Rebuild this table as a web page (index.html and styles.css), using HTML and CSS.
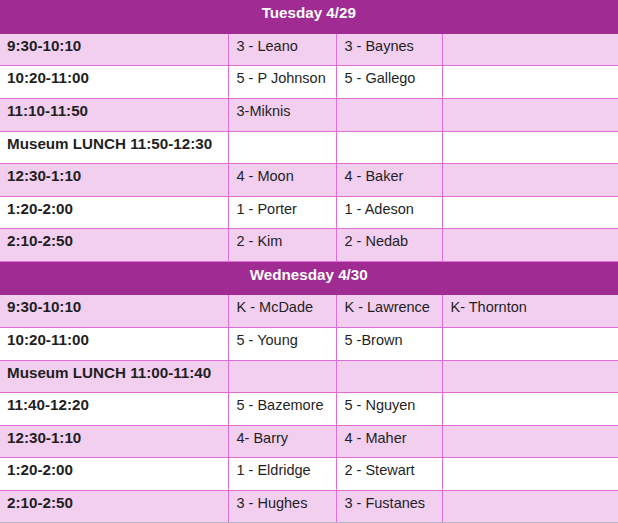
FILE: index.html
```html
<!DOCTYPE html>
<html>
<head>
<meta charset="utf-8">
<link rel="stylesheet" href="styles.css">
</head>
<body>
<table class="sched">
<colgroup><col class="c1"><col class="c2"><col class="c3"><col class="c4"></colgroup>
<tbody>
<tr class="day"><td colspan="4">Tuesday 4/29</td></tr>
<tr class="alt"><td class="time">9:30-10:10</td><td>3 - Leano</td><td>3 - Baynes</td><td></td></tr>
<tr><td class="time">10:20-11:00</td><td>5 - P Johnson</td><td>5 - Gallego</td><td></td></tr>
<tr class="alt"><td class="time">11:10-11:50</td><td>3-Miknis</td><td></td><td></td></tr>
<tr><td class="time">Museum LUNCH 11:50-12:30</td><td></td><td></td><td></td></tr>
<tr class="alt"><td class="time">12:30-1:10</td><td>4 - Moon</td><td>4 - Baker</td><td></td></tr>
<tr><td class="time">1:20-2:00</td><td>1 - Porter</td><td>1 - Adeson</td><td></td></tr>
<tr class="alt"><td class="time">2:10-2:50</td><td>2 - Kim</td><td>2 - Nedab</td><td></td></tr>
<tr class="day"><td colspan="4">Wednesday 4/30</td></tr>
<tr class="alt"><td class="time">9:30-10:10</td><td>K - McDade</td><td>K - Lawrence</td><td>K- Thornton</td></tr>
<tr><td class="time">10:20-11:00</td><td>5 - Young</td><td>5 -Brown</td><td></td></tr>
<tr class="alt"><td class="time">Museum LUNCH 11:00-11:40</td><td></td><td></td><td></td></tr>
<tr><td class="time">11:40-12:20</td><td>5 - Bazemore</td><td>5 - Nguyen</td><td></td></tr>
<tr class="alt"><td class="time">12:30-1:10</td><td>4- Barry</td><td>4 - Maher</td><td></td></tr>
<tr><td class="time">1:20-2:00</td><td>1 - Eldridge</td><td>2 - Stewart</td><td></td></tr>
<tr class="alt"><td class="time">2:10-2:50</td><td>3 - Hughes</td><td>3 - Fustanes</td><td></td></tr>
</tbody>
</table>
</body>
</html>
```
FILE: styles.css
```css
html, body {
  margin: 0;
  padding: 0;
  background: #ffffff;
  overflow: hidden;
}
body {
  width: 618px;
  height: 523px;
  font-family: "Liberation Sans", Arial, sans-serif;
  color: #1f1f1f;
}
.sched {
  border-collapse: collapse;
  table-layout: fixed;
  width: 640px;
  border-bottom: 2px solid #b4b8c8;
}
.c1 { width: 228px; }
.c2 { width: 108px; }
.c3 { width: 106px; }
.c4 { width: 198px; }
.sched td {
  height: 32.6px;
  box-sizing: border-box;
  border: 1px solid #e06cd6;
  padding: 3px 8px 0 8px;
  vertical-align: top;
  font-size: 14.5px;
  line-height: 18px;
  white-space: nowrap;
  overflow: hidden;
}
.sched td.time {
  font-weight: bold;
  font-size: 15.2px;
  padding-left: 7px;
}
.sched tr.alt td {
  background: #f2ceef;
}
.sched tr.day td {
  background: #a02b93;
  color: #ffffff;
  font-weight: bold;
  font-size: 15.2px;
  text-align: center;
  border-color: #a02b93;
  height: 33.4px;
  padding-top: 4px;
  padding-right: 0;
  padding-left: 0;
  text-indent: -22px;
}
.sched tr:first-child td { border-top: none; }
.sched td:first-child { border-left: none; }
```
